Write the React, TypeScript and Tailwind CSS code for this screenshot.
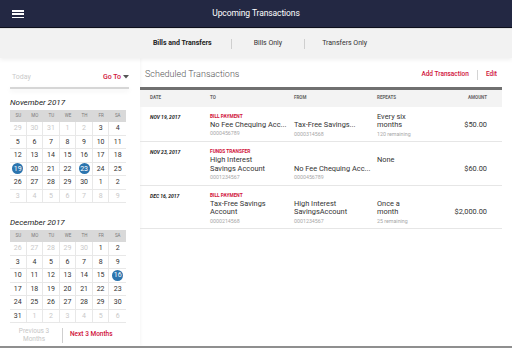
import React from "react";

type Day = { n: number; f?: boolean; s?: boolean };

const RED = "text-[#d0123a]";

function mk(arr: number[], faded: (i: number) => boolean, sel: number[]): Day[] {
  return arr.map((n, i) => ({ n, f: faded(i), s: !faded(i) && sel.includes(n) }));
}

const novNums = [29, 30, 31, 1, 2, 3, 4, ...Array.from({ length: 26 }, (_, i) => i + 5), 1, 2, 3, 4, 5, 6, 7, 8, 9];
const novDays = mk(novNums, (i) => i < 5 || i >= 35, [19, 23]);
const decNums = [26, 27, 28, 29, 30, ...Array.from({ length: 31 }, (_, i) => i + 1), 1, 2, 3, 4, 5, 6];
const decDays = mk(decNums, (i) => i < 5 || i >= 36, [16]);

function Cal({ title, days, mt }: { title: string; days: Day[]; mt: string }) {
  const heads = ["SU", "MO", "TU", "WE", "TH", "FR", "SA"];
  return (
    <div className={mt}>
      <div className="h-[10px] leading-[10px] text-[8px] italic text-[#222]">{title}</div>
      <div className="mt-[2px] w-[116px]">
        <div className="grid grid-cols-7 h-[12px] bg-[#d9d9d9]">
          {heads.map((h) => (
            <div key={h} className="flex items-center justify-center text-[4.5px] text-[#7a7a7a]">
              {h}
            </div>
          ))}
        </div>
        <div className="grid grid-cols-7">
          {days.map((d, i) => (
            <div
              key={i}
              className={`h-[13.5px] flex items-center justify-center text-[7px] border-b border-[#e8e8e8] ${
                i % 7 !== 6 ? "border-r" : ""
              } ${d.f ? "text-[#c9c9c9]" : "text-[#333]"}`}
            >
              {d.s ? (
                <span className="w-[11px] h-[11px] rounded-full bg-[#2b74ae] text-white flex items-center justify-center">
                  {d.n}
                </span>
              ) : (
                d.n
              )}
            </div>
          ))}
        </div>
      </div>
    </div>
  );
}

type Row = {
  date: string;
  kind: string;
  to: string[];
  toNo: string;
  from: string[];
  fromNo: string;
  rep: string[];
  repSub?: string;
  amt: string;
};

const rows: Row[] = [
  {
    date: "NOV 19, 2017",
    kind: "BILL PAYMENT",
    to: ["No Fee Chequing Acc..."],
    toNo: "0000456789",
    from: ["Tax-Free Savings..."],
    fromNo: "0000314568",
    rep: ["Every six", "months"],
    repSub: "120 remaining",
    amt: "$50.00",
  },
  {
    date: "NOV 23, 2017",
    kind: "FUNDS TRANSFER",
    to: ["High Interest", "Savings Account"],
    toNo: "0001234567",
    from: ["No Fee Chequing Acc..."],
    fromNo: "0000456789",
    rep: ["None"],
    amt: "$60.00",
  },
  {
    date: "DEC 16, 2017",
    kind: "BILL PAYMENT",
    to: ["Tax-Free Savings", "Account"],
    toNo: "0000214568",
    from: ["High Interest", "SavingsAccount"],
    fromNo: "0001234567",
    rep: ["Once a", "month"],
    repSub: "25 remaining",
    amt: "$2,000.00",
  },
];

const GRID = "grid grid-cols-[60px_84px_83px_60px_1fr] pl-[10px] pr-[15px]";

export default function App() {
  return (
    <div className="w-[512px] h-[348px] bg-white overflow-hidden flex flex-col font-['Roboto',sans-serif]">
      <header className="relative h-[28px] bg-[#232843] border-b border-[#0d0f1c] flex items-center justify-center shrink-0">
        <div className="absolute left-[12px] top-[10px] w-[12px] flex flex-col gap-[1.8px]">
          <span className="h-[1.6px] bg-white" />
          <span className="h-[1.6px] bg-white" />
          <span className="h-[1.6px] bg-white" />
        </div>
        <span className="text-white text-[8.5px] tracking-[-0.1px]">Upcoming Transactions</span>
      </header>
      <div className="h-[1px] bg-[#e2e2e2] shrink-0" />
      <nav className="h-[29px] bg-[#f2f2f2] flex items-center justify-center text-[7px] text-[#333] shrink-0 shadow-[0_2px_4px_rgba(0,0,0,0.06)] relative z-10">
        <span className="font-bold text-[#222] pr-[19px] pl-[8px]">Bills and Transfers</span>
        <span className="w-px h-[10px] bg-[#cfcfcf]" />
        <span className="px-[22px]">Bills Only</span>
        <span className="w-px h-[10px] bg-[#cfcfcf]" />
        <span className="pl-[17px]">Transfers Only</span>
      </nav>
      <div className="flex flex-1 min-h-0">
        <aside className="w-[140px] shrink-0 pl-[10px] pr-[11px] pt-[14px] shadow-[1px_0_3px_rgba(0,0,0,0.04)]">
          <div className="h-[10px] flex items-center justify-between pl-[2px] pr-[0px] text-[7px]">
            <span className="text-[#cacaca]">Today</span>
            <span className={`${RED} font-medium flex items-center gap-[2px]`}>
              Go To
              <svg width="6" height="4" viewBox="0 0 6 4">
                <path d="M0 0h6L3 3.5z" fill="#555" />
              </svg>
            </span>
          </div>
          <div className="mt-[5px] h-[2px] bg-[#d6d6d6] shadow-[0_2px_5px_rgba(0,0,0,0.08)]" />
          <Cal title="November 2017" days={novDays} mt="mt-[9px]" />
          <Cal title="December 2017" days={decDays} mt="mt-[15px]" />
          <div className="mt-[4px] flex items-center">
            <div className="w-[48px] text-center text-[6.5px] leading-[8px] text-[#c6c6c6]">
              Previous 3
              <br />
              Months
            </div>
            <span className="ml-[4px] w-px h-[15px] bg-[#cfcfcf]" />
            <span className={`ml-[7px] text-[6.5px] font-medium ${RED}`}>Next 3 Months</span>
          </div>
        </aside>
        <main className="flex-1 pr-[10px] pt-[12px]">
          <div className="h-[10px] flex items-center justify-between pl-[5px] pr-[5px]">
            <span className="text-[9px] text-[#555] font-light">Scheduled Transactions</span>
            <div className={`flex items-center text-[6.5px] font-medium ${RED}`}>
              <span>Add Transaction</span>
              <span className="mx-[8px] w-px h-[10px] bg-[#d4d4d4]" />
              <span>Edit</span>
            </div>
          </div>
          <div className="mt-[7px] h-[2.5px] bg-[#707070]" />
          <div className={`${GRID} h-[17px] items-center bg-[#f3f3f3] text-[4.5px] font-bold text-[#666]`}>
            <span>DATE</span>
            <span>TO</span>
            <span>FROM</span>
            <span>REPEATS</span>
            <span className="text-right">AMOUNT</span>
          </div>
          {rows.map((r, i) => (
            <div key={i} className={`${GRID} pt-[6px] pb-[3px] border-b border-[#e6e6e6]`}>
              <div className="h-[8px] leading-[8px] text-[5px] font-bold italic text-[#222]">{r.date}</div>
              <div>
                <div className={`h-[8px] leading-[8px] text-[4.8px] font-bold ${RED}`}>{r.kind}</div>
                {r.to.map((t) => (
                  <div key={t} className="leading-[8.5px] text-[7.4px] text-[#333]">
                    {t}
                  </div>
                ))}
                <div className="leading-[8.5px] text-[5.3px] text-[#a8a8a8]">{r.toNo}</div>
              </div>
              <div className="self-end">
                {r.from.map((t) => (
                  <div key={t} className="leading-[8.5px] text-[7.4px] text-[#333]">
                    {t}
                  </div>
                ))}
                <div className="leading-[8.5px] text-[5.3px] text-[#a8a8a8]">{r.fromNo}</div>
              </div>
              <div className={r.repSub ? "self-end" : "pt-[8px]"}>
                {r.rep.map((t) => (
                  <div key={t} className="leading-[8.5px] text-[7.4px] text-[#333]">
                    {t}
                  </div>
                ))}
                {r.repSub && (
                  <div className="leading-[8.5px] text-[5.3px] text-[#a8a8a8] whitespace-nowrap">{r.repSub}</div>
                )}
              </div>
              <div className="self-end pb-[8.5px] leading-[8.5px] text-[7.4px] text-[#333] text-right">{r.amt}</div>
            </div>
          ))}
        </main>
      </div>
      <div className="h-[2px] bg-[#8f8f8f] shrink-0" />
    </div>
  );
}
